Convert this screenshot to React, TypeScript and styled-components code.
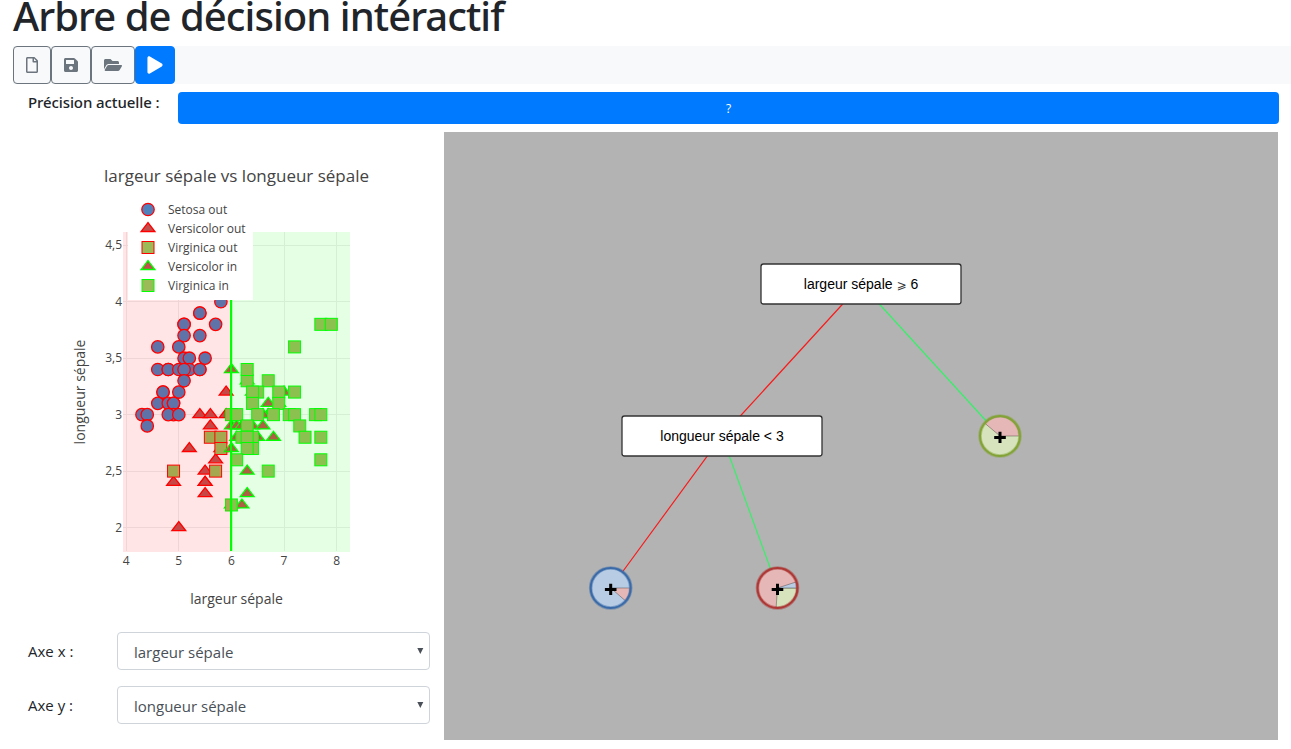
import React from "react";
import styled, { createGlobalStyle } from "styled-components";
import { FaRegFile, FaSave, FaFolderOpen, FaPlay } from "react-icons/fa";

const GlobalStyle = createGlobalStyle`
  * { box-sizing: border-box; }
  body { margin: 0; background: #fff; color: #212529; font-family: "Open Sans", sans-serif; font-size: 16px; overflow: hidden; }
`;

const Page = styled.main`
  height: 749px;
  padding-left: 13px;
  overflow: hidden;
`;

const Title = styled.h1`
  margin: 0;
  height: 46px;
  line-height: 32px;
  font-size: 40px;
  font-weight: 500;
  font-family: "Noto Sans", sans-serif;
  letter-spacing: -0.95px;
  white-space: nowrap;
`;

const Toolbar = styled.nav`
  display: flex;
  height: 38px;
  background: #f8f9fb;
`;

const ToolButton = styled.button<{ $primary?: boolean; $icon: number }>`
  display: flex;
  align-items: center;
  justify-content: center;
  height: 38px;
  padding: 0 12px;
  border: 1px solid ${(p) => (p.$primary ? "#007bff" : "#6c757d")};
  border-radius: 4px;
  background: ${(p) => (p.$primary ? "#007bff" : "transparent")};
  color: ${(p) => (p.$primary ? "#fff" : "#6c757d")};
  svg { width: ${(p) => p.$icon}px; height: 16px; overflow: visible; ${(p) => p.$primary && "transform: scale(1.08);"} }
`;

const AccuracyRow = styled.section`
  display: flex;
  align-items: flex-start;
  padding: 8px 12px 8px 15px;
`;

const AccuracyLabel = styled.span`
  width: 150px;
  line-height: 20px;
  font-family: "Noto Sans", sans-serif;
  font-size: 15px;
  font-weight: 500;
  letter-spacing: -0.1px;
  white-space: nowrap;
`;

const AccuracyBar = styled.div`
  flex: 1;
  height: 32px;
  border-radius: 4px;
  background: #007bff;
  color: #fff;
  font-size: 12px;
  line-height: 33px;
  text-align: center;
`;

const Workspace = styled.section`
  display: flex;
  height: 608px;
`;

const SidePanel = styled.aside`
  width: 431px;
  display: flex;
  flex-direction: column;
`;

const Plot = styled.svg`
  display: block;
  width: 431px;
  height: 500px;
  flex: none;
  font-family: "Open Sans", sans-serif;
  fill: #444;
`;

const AxisField = styled.label`
  display: flex;
  align-items: center;
  height: 38px;
  margin: 0 14px 16px 15px;
  color: #212529;
`;

const AxisName = styled.span`
  width: 89px;
  font-size: 15px;
`;

const SelectBox = styled.span`
  position: relative;
  flex: 1;
  height: 38px;
`;

const Select = styled.select`
  appearance: none;
  width: 100%;
  height: 38px;
  padding: 2px 16px 0;
  border: 1px solid #ced4da;
  border-radius: 4px;
  background: #fff;
  color: #495057;
  font: 15px "Open Sans", sans-serif;
`;

const Caret = styled.svg`
  position: absolute;
  right: 6px;
  top: 16px;
  pointer-events: none;
`;

const TreeCanvas = styled.svg`
  display: block;
  width: 834px;
  height: 608px;
  background: #b3b3b3;
  font-family: "Liberation Sans", Arial, "DejaVu Sans", sans-serif;
  font-size: 14px;
`;

type Shape = "circle" | "triangle" | "square";
type Series = { name: string; shape: Shape; fill: string; stroke: string; points: [number, number][] };

const series: Series[] = [
  {
    name: "Setosa out", shape: "circle", fill: "#4f81bd", stroke: "#f00",
    points: [
      [5.8, 4.0], [5.4, 3.9], [5.4, 3.9], [5.1, 3.8], [5.1, 3.8], [5.7, 3.8], [5.1, 3.7], [5.4, 3.7],
      [4.6, 3.6], [5.0, 3.6], [5.1, 3.5], [5.2, 3.5], [5.5, 3.5], [4.6, 3.4], [4.8, 3.4], [4.8, 3.4],
      [5.0, 3.4], [5.2, 3.4], [5.4, 3.4], [5.4, 3.4], [5.1, 3.4], [5.1, 3.3], [4.7, 3.2], [4.7, 3.2],
      [5.0, 3.2], [4.6, 3.1], [4.8, 3.1], [4.9, 3.1], [4.9, 3.1], [4.3, 3.0], [4.4, 3.0], [4.9, 3.0],
      [4.8, 3.0], [5.0, 3.0], [4.4, 2.9],
    ],
  },
  {
    name: "Versicolor out", shape: "triangle", fill: "#c0504d", stroke: "#f00",
    points: [
      [5.9, 3.2], [5.4, 3.0], [5.6, 3.0], [5.9, 3.0], [5.6, 2.9], [5.2, 2.7], [5.8, 2.7],
      [5.7, 2.6], [5.5, 2.5], [4.9, 2.4], [5.5, 2.4], [5.5, 2.4], [5.5, 2.3], [5.0, 2.0],
    ],
  },
  {
    name: "Virginica out", shape: "square", fill: "#9bbb59", stroke: "#f00",
    points: [[5.6, 2.8], [5.8, 2.8], [5.8, 2.7], [4.9, 2.5], [5.7, 2.5]],
  },
  {
    name: "Versicolor in", shape: "triangle", fill: "#c0504d", stroke: "#0f0",
    points: [
      [6.0, 3.4], [6.3, 3.3], [6.4, 3.2], [7.0, 3.2], [6.7, 3.1], [6.9, 3.1], [6.7, 3.0], [6.6, 3.0],
      [6.0, 2.9], [6.1, 2.9], [6.2, 2.9], [6.4, 2.9], [6.6, 2.9], [6.1, 2.8], [6.5, 2.8], [6.8, 2.8],
      [6.0, 2.7], [6.3, 2.5], [6.3, 2.3], [6.0, 2.2], [6.2, 2.2],
    ],
  },
  {
    name: "Virginica in", shape: "square", fill: "#9bbb59", stroke: "#0f0",
    points: [
      [7.7, 3.8], [7.9, 3.8], [7.2, 3.6], [6.3, 3.3], [6.3, 3.4], [6.7, 3.3], [6.5, 3.2], [6.4, 3.2],
      [6.9, 3.2], [7.2, 3.2], [6.4, 3.1], [6.9, 3.1], [6.0, 3.0], [6.1, 3.0], [6.5, 3.0], [6.8, 3.0],
      [7.1, 3.0], [7.2, 3.0], [7.6, 3.0], [7.7, 3.0], [6.3, 2.9], [7.3, 2.9], [6.2, 2.8], [6.4, 2.8],
      [6.3, 2.8], [7.4, 2.8], [7.7, 2.8], [6.4, 2.7], [6.3, 2.7], [6.1, 2.6], [7.7, 2.6], [6.7, 2.5],
      [6.0, 2.2],
    ],
  },
];

const px = (v: number) => 113.2 + (v - 4) * 52.6;
const py = (v: number) => 113.3 + (4.5 - v) * 112.9;

function Marker({ s, x, y }: { s: Series; x: number; y: number }) {
  const paint = { fill: s.fill, stroke: s.stroke, strokeWidth: s.shape === "square" ? 1 : 1.3 };
  if (s.shape === "circle") return <circle cx={x} cy={y} r={6.2} {...paint} />;
  if (s.shape === "square") return <rect x={x - 6} y={y - 6} width={12} height={12} {...paint} />;
  return <path d={`M${x - 6.93},${y + 3}H${x + 6.93}L${x},${y - 6}Z`} {...paint} />;
}

function ScatterPlot() {
  return (
    <Plot viewBox="0 0 431 500">
      <text x={223.5} y={49.5} fontSize={17} textAnchor="middle" textLength={265}>largeur sépale vs longueur sépale</text>
      <g stroke="#eee">
        {[4, 5, 6, 7, 8].map((v) => <path key={v} d={`M${Math.round(px(v) - 0.5) + 0.5},100V419`} />)}
        {[2, 2.5, 3, 3.5, 4, 4.5].map((v) => <path key={v} d={`M110,${Math.round(py(v) - 0.5) + 0.5}H337`} />)}
      </g>
      {series.map((s) => s.points.map(([a, b], i) => <Marker key={s.name + i} s={s} x={px(a)} y={py(b)} />))}
      <rect x={110} y={100} width={108.4} height={320} fill="#f00" fillOpacity={0.1} />
      <rect x={218.4} y={100} width={118.6} height={320} fill="#0f0" fillOpacity={0.1} />
      <path d="M218.1,100V419" stroke="#0f0" strokeWidth={2.2} />
      <rect x={115} y={68} width={125} height={100} fill="#fff" />
      {series.map((s, i) => (
        <g key={s.name}>
          <Marker s={s} x={135} y={77.5 + i * 19} />
          <text x={155} y={82 + i * 19} fontSize={12}>{s.name}</text>
        </g>
      ))}
      <g fontSize={12}>
        {[4, 5, 6, 7, 8].map((v) => <text key={v} x={px(v)} y={433} textAnchor="middle">{v}</text>)}
        {[2, 2.5, 3, 3.5, 4, 4.5].map((v) => (
          <text key={v} x={109} y={py(v) + 4} textAnchor="end">{String(v).replace(".", ",")}</text>
        ))}
      </g>
      <text x={223.5} y={472} fontSize={14} textAnchor="middle">largeur sépale</text>
      <text transform="translate(72 260) rotate(-90)" fontSize={14} textAnchor="middle">longueur sépale</text>
    </Plot>
  );
}

const polar = (deg: number, r: number) => {
  const a = (deg * Math.PI) / 180;
  return [r * Math.cos(a), r * Math.sin(a)];
};

type Slice = { from: number; to: number; color: string };

function Leaf({ x, y, ring, base, slices }: { x: number; y: number; ring: string; base: string; slices: Slice[] }) {
  return (
    <g transform={`translate(${x} ${y})`}>
      <circle r={20} fill={base} />
      {slices.map((s) => {
        const [x1, y1] = polar(s.from, 19.5);
        const [x2, y2] = polar(s.to, 19.5);
        return <path key={s.from} d={`M0,0L${x1},${y1}A19.5,19.5 0 0 1 ${x2},${y2}Z`} fill={s.color} stroke="#000" strokeOpacity={0.35} strokeWidth={0.9} />;
      })}
      <circle r={20} fill="none" stroke={ring} strokeWidth={3.6} strokeOpacity={0.45} />
      <circle r={20} fill="none" stroke={ring} strokeWidth={2} />
      <path d="M-5.8,1.5H5.8M0,-4.2V7" stroke="#000" strokeWidth={3} />
    </g>
  );
}

function Decision({ x, y, children }: { x: number; y: number; children: React.ReactNode }) {
  return (
    <g>
      <rect x={x - 100} y={y - 20} width={200} height={40} rx={2.5} fill="#fff" stroke="#333" strokeWidth={1.3} />
      <text x={x} y={y + 5} textAnchor="middle" fill="#000">{children}</text>
    </g>
  );
}

function DecisionTree() {
  return (
    <TreeCanvas viewBox="0 0 834 608">
      <g strokeWidth={1.2}>
        <path d="M417,152L278,304L166.7,456" stroke="#f81d1d" fill="none" />
        <path d="M417,152L556,304M278,304L333.5,456" stroke="#36f068" />
      </g>
      <Decision x={417} y={152}>largeur sépale <tspan fontSize={12} fill="#333">⩾</tspan> 6</Decision>
      <Decision x={278} y={304}>longueur sépale &lt; 3</Decision>
      <Leaf x={166.7} y={456} ring="#3a6ba8" base="#b8cce4" slices={[{ from: 0, to: 41, color: "#e5b8b7" }]} />
      <Leaf x={333.5} y={456} ring="#ad3836" base="#e5b8b7" slices={[{ from: 0, to: 94, color: "#d6e3bc" }, { from: 342, to: 360, color: "#b8cce4" }]} />
      <Leaf x={556} y={304} ring="#83a337" base="#d6e3bc" slices={[{ from: 220, to: 360, color: "#e5b8b7" }]} />
    </TreeCanvas>
  );
}

function AxisSelect({ name, value }: { name: string; value: string }) {
  return (
    <AxisField>
      <AxisName>{name}</AxisName>
      <SelectBox>
        <Select defaultValue={value}>
          <option>largeur sépale</option>
          <option>longueur sépale</option>
        </Select>
        <Caret width="7" height="6" viewBox="0 0 7 6"><path d="M0.3,0H6.3L3.3,6Z" fill="#495057" /></Caret>
      </SelectBox>
    </AxisField>
  );
}

export default function App() {
  return (
    <Page>
      <GlobalStyle />
      <Title>Arbre de décision intéractif</Title>
      <Toolbar>
        <ToolButton $icon={12}><FaRegFile /></ToolButton>
        <ToolButton $icon={14}><FaSave /></ToolButton>
        <ToolButton $icon={18}><FaFolderOpen /></ToolButton>
        <ToolButton $icon={14} $primary><FaPlay /></ToolButton>
      </Toolbar>
      <AccuracyRow>
        <AccuracyLabel>Précision actuelle :</AccuracyLabel>
        <AccuracyBar>?</AccuracyBar>
      </AccuracyRow>
      <Workspace>
        <SidePanel>
          <ScatterPlot />
          <AxisSelect name="Axe x :" value="largeur sépale" />
          <AxisSelect name="Axe y :" value="longueur sépale" />
        </SidePanel>
        <DecisionTree />
      </Workspace>
    </Page>
  );
}
